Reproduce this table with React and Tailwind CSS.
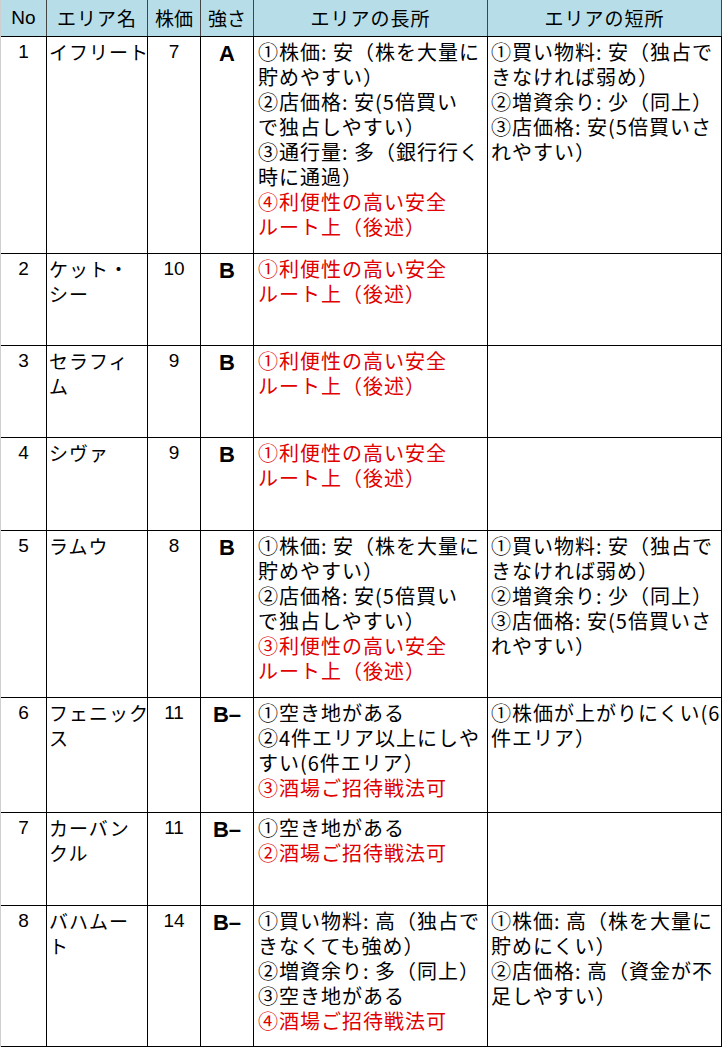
import React from 'react';

// lines: plain string = black, ['r', text] = red
const RED = 'r';

const rows = [
  {
    no: '1', name: ['イフリート'], price: '7', rank: 'A', h: 'h-[217px]',
    pros: ['①株価: 安（株を大量に', '貯めやすい）', '②店価格: 安(5倍買い', 'で独占しやすい）', '③通行量: 多（銀行行く', '時に通過）', [RED, '④利便性の高い安全'], [RED, 'ルート上（後述）']],
    cons: ['①買い物料: 安（独占で', 'きなければ弱め）', '②増資余り: 少（同上）', '③店価格: 安(5倍買いさ', 'れやすい）'],
  },
  {
    no: '2', name: ['ケット・', 'シー'], price: '10', rank: 'B', h: 'h-[92px]',
    pros: [[RED, '①利便性の高い安全'], [RED, 'ルート上（後述）']],
    cons: [],
  },
  {
    no: '3', name: ['セラフィ', 'ム'], price: '9', rank: 'B', h: 'h-[92px]',
    pros: [[RED, '①利便性の高い安全'], [RED, 'ルート上（後述）']],
    cons: [],
  },
  {
    no: '4', name: ['シヴァ'], price: '9', rank: 'B', h: 'h-[93px]',
    pros: [[RED, '①利便性の高い安全'], [RED, 'ルート上（後述）']],
    cons: [],
  },
  {
    no: '5', name: ['ラムウ'], price: '8', rank: 'B', h: 'h-[167px]',
    pros: ['①株価: 安（株を大量に', '貯めやすい）', '②店価格: 安(5倍買い', 'で独占しやすい）', [RED, '③利便性の高い安全'], [RED, 'ルート上（後述）']],
    cons: ['①買い物料: 安（独占で', 'きなければ弱め）', '②増資余り: 少（同上）', '③店価格: 安(5倍買いさ', 'れやすい）'],
  },
  {
    no: '6', name: ['フェニック', 'ス'], price: '11', rank: 'B–', h: 'h-[115px]',
    pros: ['①空き地がある', '②4件エリア以上にしや', 'すい(6件エリア）', [RED, '③酒場ご招待戦法可']],
    cons: ['①株価が上がりにくい(6', '件エリア）'],
  },
  {
    no: '7', name: ['カーバン', 'クル'], price: '11', rank: 'B–', h: 'h-[93px]',
    pros: ['①空き地がある', [RED, '②酒場ご招待戦法可']],
    cons: [],
  },
  {
    no: '8', name: ['バハムー', 'ト'], price: '14', rank: 'B–', h: 'h-[141px]',
    pros: ['①買い物料: 高（独占で', 'きなくても強め）', '②増資余り: 多（同上）', '③空き地がある', [RED, '④酒場ご招待戦法可']],
    cons: ['①株価: 高（株を大量に', '貯めにくい）', '②店価格: 高（資金が不', '足しやすい）'],
  },
];

const COLS = 'grid grid-cols-[46px_101px_53px_53px_234px_234px]';

function Lines({ lines }) {
  return lines.map((l, i) => {
    const red = Array.isArray(l);
    const text = red ? l[1] : l;
    return (
      <div key={i} className={red ? 'h-[25px] whitespace-nowrap text-[#e00000]' : 'h-[25px] whitespace-nowrap'}>
        {text}
      </div>
    );
  });
}

export default function App() {
  return (
    <div className="w-[722px] bg-white text-black font-['Noto_Sans_CJK_JP',sans-serif]">
      <div className="border-l border-[#cfcfcf] w-[722px]">
        {/* header */}
        <div className={`${COLS} h-[37px] bg-[#b7dee8] border-b border-black text-[19px] leading-[36px]`}>
          <div className="border-r border-[#444] text-center font-['Liberation_Sans',sans-serif]">No</div>
          <div className="border-r border-[#444] text-center tracking-[1px]">エリア名</div>
          <div className="border-r border-[#444] text-center">株価</div>
          <div className="border-r border-[#444] text-center">強さ</div>
          <div className="border-r border-[#444] text-center tracking-[1px]">エリアの長所</div>
          <div className="border-r border-[#444] text-center tracking-[1px]">エリアの短所</div>
        </div>

        {rows.map(r => (
          <div key={r.no} className={`${COLS} ${r.h} border-b border-black text-[20px] leading-[25px]`}>
            <div className="border-r border-black text-center pt-[2px] font-['Liberation_Sans',sans-serif] text-[19px]">{r.no}</div>
            <div className="border-r border-black pl-[2px] pt-[2px] text-[19px] tracking-[1px]">
              <Lines lines={r.name} />
            </div>
            <div className="border-r border-black text-center pt-[2px] font-['Liberation_Sans',sans-serif] text-[19px]">{r.price}</div>
            <div className="border-r border-black text-center pt-[4px] font-bold font-['Liberation_Sans',sans-serif] text-[22px]">{r.rank}</div>
            <div className="border-r border-black pl-[4px] pt-[2px] overflow-hidden tracking-[1px]">
              <Lines lines={r.pros} />
            </div>
            <div className="border-r border-black pl-[3px] pt-[2px] overflow-hidden tracking-[1px]">
              <Lines lines={r.cons} />
            </div>
          </div>
        ))}
      </div>
    </div>
  );
}
